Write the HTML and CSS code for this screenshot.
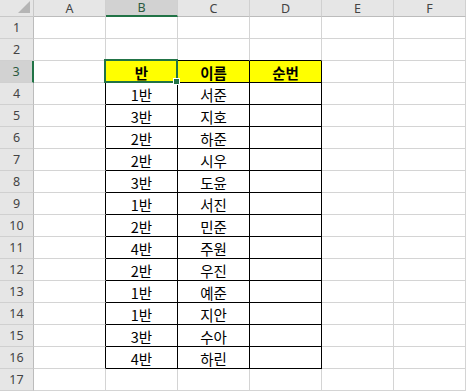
FILE: index.html
```html
<!DOCTYPE html>
<html lang="ko">
<head>
    <meta charset="UTF-8">
    <title>Sheet1</title>
    <link rel="stylesheet" href="styles.css">
</head>
<body>
    <div class="sheet">
        <!-- column headers -->
        <div class="corner"><span class="tri"></span></div>
        <div class="ch">A</div>
        <div class="ch sel">B</div>
        <div class="ch">C</div>
        <div class="ch">D</div>
        <div class="ch">E</div>
        <div class="ch">F</div>

        <div class="rh">1</div>
        <div class="c"></div><div class="c"></div><div class="c"></div><div class="c"></div><div class="c"></div><div class="c"></div>

        <div class="rh">2</div>
        <div class="c"></div><div class="c bt"></div><div class="c bt"></div><div class="c bt"></div><div class="c"></div><div class="c"></div>

        <div class="rh sel">3</div>
        <div class="c bl"></div>
        <div class="c t hd active">반<span class="cursor"><span class="handle"></span></span></div>
        <div class="c t hd">이름</div>
        <div class="c t hd">순번</div>
        <div class="c"></div><div class="c"></div>

        <div class="rh">4</div>
        <div class="c bl"></div><div class="c t">1반</div><div class="c t">서준</div><div class="c t"></div><div class="c"></div><div class="c"></div>

        <div class="rh">5</div>
        <div class="c bl"></div><div class="c t">3반</div><div class="c t">지호</div><div class="c t"></div><div class="c"></div><div class="c"></div>

        <div class="rh">6</div>
        <div class="c bl"></div><div class="c t">2반</div><div class="c t">하준</div><div class="c t"></div><div class="c"></div><div class="c"></div>

        <div class="rh">7</div>
        <div class="c bl"></div><div class="c t">2반</div><div class="c t">시우</div><div class="c t"></div><div class="c"></div><div class="c"></div>

        <div class="rh">8</div>
        <div class="c bl"></div><div class="c t">3반</div><div class="c t">도윤</div><div class="c t"></div><div class="c"></div><div class="c"></div>

        <div class="rh">9</div>
        <div class="c bl"></div><div class="c t">1반</div><div class="c t">서진</div><div class="c t"></div><div class="c"></div><div class="c"></div>

        <div class="rh">10</div>
        <div class="c bl"></div><div class="c t">2반</div><div class="c t">민준</div><div class="c t"></div><div class="c"></div><div class="c"></div>

        <div class="rh">11</div>
        <div class="c bl"></div><div class="c t">4반</div><div class="c t">주원</div><div class="c t"></div><div class="c"></div><div class="c"></div>

        <div class="rh">12</div>
        <div class="c bl"></div><div class="c t">2반</div><div class="c t">우진</div><div class="c t"></div><div class="c"></div><div class="c"></div>

        <div class="rh">13</div>
        <div class="c bl"></div><div class="c t">1반</div><div class="c t">예준</div><div class="c t"></div><div class="c"></div><div class="c"></div>

        <div class="rh">14</div>
        <div class="c bl"></div><div class="c t">1반</div><div class="c t">지안</div><div class="c t"></div><div class="c"></div><div class="c"></div>

        <div class="rh">15</div>
        <div class="c bl"></div><div class="c t">3반</div><div class="c t">수아</div><div class="c t"></div><div class="c"></div><div class="c"></div>

        <div class="rh">16</div>
        <div class="c bl"></div><div class="c t">4반</div><div class="c t">하린</div><div class="c t"></div><div class="c"></div><div class="c"></div>

        <div class="rh">17</div>
        <div class="c"></div><div class="c"></div><div class="c"></div><div class="c"></div><div class="c"></div><div class="c"></div>
    </div>
</body>
</html>
```

FILE: styles.css
```css
body {
    margin: 0;
    padding: 0;
    background-color: #ffffff;
    font-family: "Noto Sans CJK KR", "Noto Sans", sans-serif;
    overflow: hidden;
}
.sheet {
    display: grid;
    grid-template-columns: 34px repeat(6, 72px);
    grid-template-rows: 17px repeat(17, 22px);
}
.corner {
    position: relative;
    background-color: #e6e6e6;
    border-right: 1px solid #c8c8c8;
    border-bottom: 1px solid #c8c8c8;
}
.tri {
    position: absolute;
    right: 3px;
    bottom: 3px;
    width: 0;
    height: 0;
    border-left: 12px solid transparent;
    border-bottom: 12px solid #b5b5b5;
}
.ch,
.rh {
    display: flex;
    align-items: center;
    justify-content: center;
    background-color: #e6e6e6;
    color: #444444;
    font-family: "Noto Sans", "Liberation Sans", sans-serif;
    font-size: 12.5px;
}
.ch {
    border-right: 1px solid #d0d0d0;
    border-bottom: 1px solid #bcbcbc;
}
.rh {
    border-right: 1px solid #bcbcbc;
    border-bottom: 1px solid #d0d0d0;
}
.ch.sel {
    background-color: #d2d2d2;
    color: #2b5a40;
    border-bottom: 2px solid #217346;
}
.rh.sel {
    background-color: #d2d2d2;
    color: #2b5a40;
    border-right: 2px solid #217346;
}
.c {
    display: flex;
    align-items: center;
    justify-content: center;
    padding-top: 1px;
    border-right: 1px solid #d4d4d4;
    border-bottom: 1px solid #d4d4d4;
    font-size: 14.5px;
    color: #000000;
}
.c.bl {
    border-right-color: #000000;
}
.c.bt {
    border-bottom-color: #000000;
}
.c.t {
    border-right-color: #000000;
    border-bottom-color: #000000;
}
.c.hd {
    background-color: #ffff00;
    font-weight: bold;
}
.active {
    position: relative;
}
.cursor {
    position: absolute;
    left: -2px;
    top: -2px;
    right: -1px;
    bottom: -1px;
    border: 2px solid #217346;
}
.handle {
    position: absolute;
    right: -4px;
    bottom: -4px;
    width: 5px;
    height: 5px;
    background-color: #217346;
    border: 1px solid #ffffff;
}
```
